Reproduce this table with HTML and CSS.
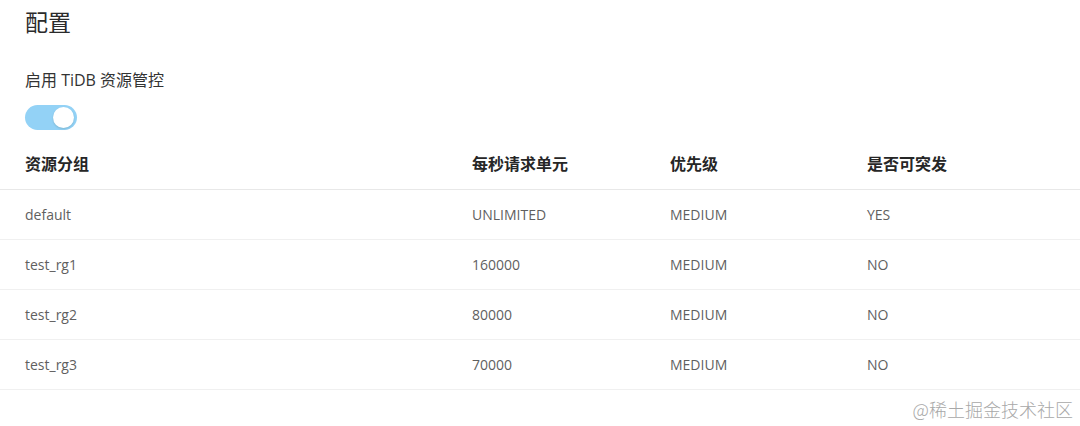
FILE: index.html
```html
<!DOCTYPE html>
<html lang="zh-CN">
<head>
<meta charset="utf-8">
<link rel="stylesheet" href="styles.css">
</head>
<body>
<div class="page">
  <div class="head">
    <h1 class="title">配置</h1>
    <div class="label">启用 TiDB 资源管控</div>
    <div class="switch"><span class="knob"></span></div>
  </div>
  <div class="table">
    <div class="row hrow">
      <div class="cell">资源分组</div>
      <div class="cell">每秒请求单元</div>
      <div class="cell">优先级</div>
      <div class="cell">是否可突发</div>
    </div>
    <div class="row">
      <div class="cell">default</div>
      <div class="cell">UNLIMITED</div>
      <div class="cell">MEDIUM</div>
      <div class="cell">YES</div>
    </div>
    <div class="row">
      <div class="cell">test_rg1</div>
      <div class="cell">160000</div>
      <div class="cell">MEDIUM</div>
      <div class="cell">NO</div>
    </div>
    <div class="row">
      <div class="cell">test_rg2</div>
      <div class="cell">80000</div>
      <div class="cell">MEDIUM</div>
      <div class="cell">NO</div>
    </div>
    <div class="row">
      <div class="cell">test_rg3</div>
      <div class="cell">70000</div>
      <div class="cell">MEDIUM</div>
      <div class="cell">NO</div>
    </div>
  </div>
  <div class="watermark">@稀土掘金技术社区</div>
</div>
</body>
</html>
```
FILE: styles.css
```css
* { box-sizing: border-box; }
html, body { margin: 0; padding: 0; background: #fff; }
body {
  font-family: "Open Sans", "Noto Sans CJK SC", sans-serif;
  color: #5f5f5f;
  width: 1080px;
  height: 426px;
  overflow: hidden;
}
.page { position: relative; width: 1080px; height: 426px; }
.head {
  padding: 7px 0 0 25px;
  display: flex;
  flex-direction: column;
  align-items: flex-start;
}
.title {
  margin: 0;
  font-size: 23px;
  line-height: 30px;
  font-weight: 400;
  color: #2b2b2b;
}
.label {
  margin-top: 32px;
  font-size: 16px;
  line-height: 22px;
  color: #333;
}
.switch {
  margin-top: 14px;
  width: 52px;
  height: 25px;
  border-radius: 13px;
  background: #93d2f6;
  display: flex;
  align-items: center;
  justify-content: flex-end;
  padding-right: 3px;
}
.knob {
  width: 21px;
  height: 21px;
  border-radius: 50%;
  background: #fff;
  box-shadow: 0 1px 2px rgba(0, 35, 11, 0.15);
}
.table { margin-top: 9px; }
.row {
  display: grid;
  grid-template-columns: 447px 198px 197px 1fr;
  height: 50px;
  border-bottom: 1px solid #f0f0f0;
  align-items: center;
  font-size: 14px;
  color: #5f5f5f;
}
.row.hrow {
  font-weight: 700;
  color: #262626;
  font-size: 16px;
  height: 51px;
  padding-bottom: 2px;
  border-bottom-color: #e8e8e8;
}
.cell { padding-left: 25px; }
.watermark {
  position: absolute;
  right: 7px;
  top: 397px;
  font-family: "Noto Sans CJK SC", sans-serif;
  font-size: 18px;
  line-height: 24px;
  color: #a8a8a8;
  font-weight: 300;
}
```
